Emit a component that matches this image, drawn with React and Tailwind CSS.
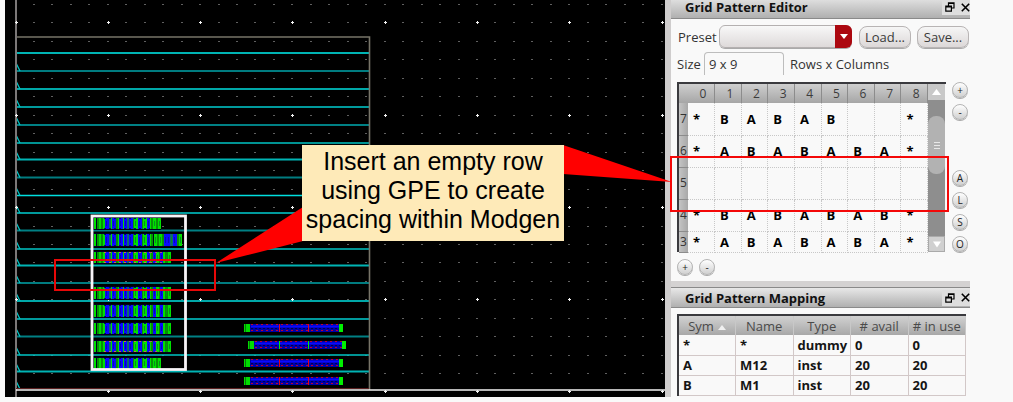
import React from 'react';

const BLACK_BG = '#000000';
const MINOR = 18.46;

const trackYs = [53, 71, 89, 107, 125, 143, 159.5, 177.5, 195.5, 213, 230.5, 249, 265.5, 283, 301, 319, 336.5, 355, 371.5];
const trackColors = ['#00b4b4', '#007c80', '#00e0e0', '#009a9c', '#008084', '#00c4c4'];

// [x, width, color] of the stripes in one device row
const G = '#00e000';
const D = '#069006';
const B = '#0a0aff';
const T = '#0a6a70';
const stripes = [
  [94, 2, G], [97, 2, D], [99, 2, G], [101, 2, D], [103, 2, G], [105, 4, B], [109, 2, T], [111, 1, G], [112, 4, B],
  [116, 2, D], [118, 1, G], [119, 4, B], [123, 1, G], [124, 3, B], [127, 2, T], [129, 4, B], [133, 1, D],
  [134, 4, G], [138, 4, B], [142, 1, D], [143, 4, G], [147, 3, B], [150, 1, G], [151, 2, D],
];
const tails = {
  short: [[153, 3, G], [156, 2, D], [158, 3, G]],
  mid: [[153, 3, B], [156, 3, G], [159, 1, D], [160, 3, B], [163, 2, G], [165, 3, D], [168, 3, G]],
  long: [[154, 3, G], [157, 2, D], [159, 3, G], [162, 2, D], [164, 3, B], [167, 3, B], [170, 3, T], [173, 4, B], [177, 2, D], [179, 3, G]],
};
const deviceRows = [
  [218, 11, 'short', false], [234, 12, 'long', false], [252, 11, 'mid', true], [287, 12, 'mid', false],
  [305, 12, 'mid', false], [323, 11, 'mid', false], [341, 11, 'mid', true], [358, 11, 'short', false],
];

const bars = [
  [244, 343, 324, 'red'], [248, 346, 341, 'green'], [244, 343, 359, 'red'], [244, 343, 377, 'red'],
];

function DeviceRow({ y, h, tail, warm }) {
  const all = stripes.concat(tails[tail]);
  return (
    <g>
      {all.map(([x, w, c]) => (
        <g key={x}>
          <rect x={x} y={y} width={w} height={h} fill={c} />
          {w > 2 && <rect x={x + 1} y={y + 3} width="1" height={h - 6} fill={c === B ? '#0808b8' : '#088c20'} />}
        </g>
      ))}
      <path d={`M104 ${y}.5H150M104 ${y + h - 1}.5H150`} stroke={warm ? '#c86a50' : '#000080'} strokeDasharray="2 3" />
      {warm && <path d={`M150 ${y}.5H164M150 ${y + h - 1}.5H164`} stroke="#b05078" strokeDasharray="2 3" />}
    </g>
  );
}

function Bar({ x1, x2, y, mark }) {
  return (
    <g>
      <rect x={x1 + 6} y={y} width={x2 - x1 - 10} height="8" fill="#0000a8" />
      <path d={`M${x1 + 7} ${y + 2.5}H${x2 - 4}`} stroke="#0a0aff" strokeWidth="2" />
      <path d={`M${x1 + 7} ${y + 4}.5H${x2 - 4}`} stroke="#000050" strokeDasharray="2 2" />
      <path d={`M${x1 + 7} ${y + 0.5}H${x2 - 4}M${x1 + 7} ${y + 6}.5H${x2 - 4}`} stroke="#c00030" strokeDasharray="2 3" />
      <rect x={x1} y={y} width="6" height="8" fill="#00dc00" />
      <rect x={x1 + 1} y={y} width="1" height="8" fill="#067a06" />
      <rect x={x2 - 4} y={y} width="4" height="8" fill="#00f000" />
      <rect x="279" y={y} width="1" height="8" fill={mark === 'green' ? '#00f000' : '#e00020'} />
      <rect x="308" y={y} width="1" height="8" fill={mark === 'green' ? '#00f000' : '#e00020'} />
    </g>
  );
}

function LayoutCanvas() {
  const minor = [];
  const major = [];
  for (let r = 0; r < 21; r++) {
    for (let c = 0; c < 36; c++) {
      const x = Math.round(15.5 + c * MINOR);
      const y = Math.round(4 + r * MINOR);
      if (c % 5 === 0 && r % 5 === 1) major.push([x, y]);
      else if (c > 0) minor.push([x, y]);
    }
  }
  for (let c = 1; c < 8; c++) major.push([Math.round(15.5 + c * 5 * MINOR), 391]);
  return (
    <svg width="665" height="397" viewBox="0 0 665 397" className="block" role="img" aria-label="Layout canvas">
      <rect x="5" width="660" height="397" fill={BLACK_BG} />
      {minor.map(([x, y]) => <rect key={`${x}-${y}`} x={x - 1} y={y} width="2" height="1" fill="#606060" />)}
      {trackYs.map((y, i) => (
        <g key={y}>
          <path d={`M16 ${y}H369`} stroke={trackColors[i % 6]} strokeWidth={i % 3 === 2 ? 1.3 : 2} />
          {i > 0 && <path d={`M16.5 ${y - 7}L20 ${y}`} stroke="#00c8c8" strokeWidth="1.3" fill="none" />}
        </g>
      ))}
      <path d="M16.5 382L20 389" stroke="#00c8c8" strokeWidth="1.3" />
      <path d="M16 37H369.500V390" stroke="#777468" strokeWidth="1.6" fill="none" />
      <path d="M16 0V397" stroke="#7c7878" strokeWidth="2" />
      {major.map(([x, y]) => (
        <path key={`${x}-${y}`} d={`M${x - 1} ${y + 0.5}h3M${x + 0.5} ${y - 1}v3`} stroke="#f4f4f4" />
      ))}
      <path d="M16 388.500H369" stroke="#5a2020" />
      <path d="M16 390H665" stroke="#f4f4f4" strokeWidth="1.400" />
      {deviceRows.map(([y, h, tail, warm]) => (
        <rect key={y} x="93" y={y - 1} width={tail === 'short' ? 68 : 78} height={h + 2} fill="#000020" />
      ))}
      {deviceRows.map(([y, h, tail, warm]) => <DeviceRow key={y} y={y} h={h} tail={tail} warm={warm} />)}
      <rect x="92" y="216" width="93.500" height="153.500" fill="none" stroke="#f8f4f8" strokeWidth="2.800" />
      {bars.map(([x1, x2, y, mark]) => <Bar key={y} x1={x1} x2={x2} y={y} mark={mark} />)}
      <rect x="55" y="260" width="160" height="30" fill="none" stroke="#e80808" strokeWidth="2" />
    </svg>
  );
}

function TitleBar({ title, className }) {
  return (
    <div className={`flex items-center border-y border-[#8a8a8a] bg-linear-to-b from-[#e8e8e8] to-[#b0b0b0] pl-[14px] ${className}`}>
      <h2 className="grow text-[13px] leading-4 font-bold text-[#111]">{title}</h2>
      <button aria-label="Float" className="flex size-4 items-center justify-center bg-[#dedede]">
        <svg width="10" height="10" viewBox="0 0 10 10" fill="none" stroke="#000" strokeWidth="1.200">
          <path d="M3.500 3.500V.8H9V6H6.500M3.500 1.500H9M.8 4H6.400V9.200H.8ZM.8 5H6.400" />
        </svg>
      </button>
      <button aria-label="Close" className="flex h-4 w-3 items-center justify-end bg-[#dedede]">
        <svg width="9" height="9" viewBox="0 0 9 9" stroke="#000" strokeWidth="1.600">
          <path d="M.8 .8L8.200 8.200M8.200 .8L.8 8.200" />
        </svg>
      </button>
    </div>
  );
}

function RoundButton({ children }) {
  return (
    <button className="flex size-4 items-center justify-center rounded-full border border-[#b4b4b4] bg-linear-to-b from-white to-[#d0d0d0] text-[10px] leading-3 text-[#222] shadow-[0_1px_0_#a8a8a8]">
      {children}
    </button>
  );
}

function PushButton({ children }) {
  return (
    <button className="h-[22px] w-[52px] rounded-lg border border-[#b8b4b4] bg-linear-to-b from-[#f6f6f6] to-[#dcd8d8] text-[13px] leading-4 text-[#3a3a3a] shadow-[0_1px_0_#aaa]">
      {children}
    </button>
  );
}

const gridRows = [
  ['7', '*BABAB  *'],
  ['6', '*ABABABA*'],
  ['5', '         '],
  ['4', '*BABABAB*'],
  ['3', '*ABABABA*'],
];

function PatternGrid() {
  return (
    <div className="flex h-[170px] w-[269px] border-t-2 border-l-2 border-[#3a3a3e]">
      <table className="w-[249px] shrink-0 table-fixed border-collapse self-start text-[12px] leading-4">
        <thead>
          <tr className="h-[19px] bg-linear-to-b from-[#cfcfcf] to-[#a6a6a6] text-[#3c3c3c]">
            <th className="w-[9px] p-0" aria-label="Row" />
            {[0, 1, 2, 3, 4, 5, 6, 7, 8].map((n) => (
              <th key={n} scope="col" className="border-r border-[#8c8c8c] p-0 pl-1 font-normal">{n}</th>
            ))}
          </tr>
        </thead>
        <tbody>
          {gridRows.map(([label, cells]) => (
            <tr key={label} className="h-8 last:h-[21px]">
              <th scope="row" className="border-b border-[#8c8c8c] bg-linear-to-r from-[#c4c4c4] to-[#a8a8a8] p-0 font-normal text-[#333]">{label}</th>
              {cells.split('').map((ch, i) => (
                <td key={i} className="border-r border-b border-dotted border-[#c8c8c8] p-0 pl-[5px] text-[13px] font-bold text-black">
                  {ch}
                </td>
              ))}
            </tr>
          ))}
        </tbody>
      </table>
      <div className="flex w-[17px] flex-col bg-[#8e8e8e]">
        <button aria-label="Scroll up" className="flex h-4 items-center justify-center bg-[#c8c8c8]">
          <svg width="9" height="6" viewBox="0 0 9 6" fill="#fff"><path d="M4.500 0L9 6H0Z" /></svg>
        </button>
        <div className="mt-4 flex h-[58px] items-center justify-center rounded-lg bg-[#b2b2b2]">
          <svg width="6" height="9" viewBox="0 0 6 9" stroke="#e8e8e8"><path d="M0 1.500H6M0 4.500H6M0 7.500H6" /></svg>
        </div>
        <div className="grow" />
        <button aria-label="Scroll down" className="flex h-4 items-center justify-center border border-[#aaa] bg-[#d0d0d0]">
          <svg width="8" height="7" viewBox="0 0 9 7" fill="#fff"><path d="M0 0H9L4.500 7Z" /></svg>
        </button>
      </div>
    </div>
  );
}

const mapping = [
  ['*', '*', 'dummy', '0', '0'],
  ['A', 'M12', 'inst', '20', '20'],
  ['B', 'M1', 'inst', '20', '20'],
];

function MappingTable() {
  return (
    <table className="w-full table-fixed border-collapse border-t-2 border-l-2 border-[#3a3a3e] text-left text-[13px] leading-4">
      <thead>
        <tr className="h-5 bg-linear-to-b from-[#d4d4d4] to-[#a8a8a8] text-[#4a4a4a]">
          {['Sym', 'Name', 'Type', '# avail', '# in use'].map((h) => (
            <th key={h} scope="col" className="border-r border-[#c8c8c8] p-0 text-center font-normal whitespace-nowrap">
              {h}
              {h === 'Sym' && (
                <svg width="8" height="5" viewBox="0 0 8 5" className="ml-1 inline-block align-middle"><path d="M4 0L8 5H0Z" fill="#f0f0f0" /></svg>
              )}
            </th>
          ))}
        </tr>
      </thead>
      <tbody>
        {mapping.map((row) => (
          <tr key={row[0]} className="h-5">
            {row.map((v, i) => (
              <td key={i} className="border-r border-b border-[#d2c8c8] p-0 pl-1 font-bold text-[#151515]">{v}</td>
            ))}
          </tr>
        ))}
      </tbody>
    </table>
  );
}

function SidePanel() {
  return (
    <aside className="mr-[43px] flex w-[305px] shrink-0 flex-col border-l-[6px] border-[#cfcdcd]">
      <TitleBar title="Grid Pattern Editor" className="-mt-[5px] h-6" />
      <div className="flex items-center pt-[6px] pl-[7px] text-[13px] leading-4 text-[#333]">
        <label htmlFor="preset" className="w-[41px]">Preset</label>
        <div className="relative mr-[7px] h-[23px] w-[133px]">
          <select id="preset" className="size-full appearance-none rounded-md border border-[#b4b0b0] bg-linear-to-b from-[#f8f8f8] to-[#dedada] shadow-[0_1px_0_#aaa]">
            <option value="" />
          </select>
          <span className="pointer-events-none absolute inset-y-0 right-0 flex w-[17px] items-center justify-center rounded-r-md bg-[#ac0810]">
            <svg width="8" height="5" viewBox="0 0 8 5" fill="#fff"><path d="M0 0H8L4 5Z" /></svg>
          </span>
        </div>
        <div className="flex gap-[6px]">
          <PushButton>Load...</PushButton>
          <PushButton>Save...</PushButton>
        </div>
      </div>
      <div className="flex items-center pt-1 pl-[6px] text-[13px] leading-4 text-[#333]">
        <label htmlFor="size" className="w-[27px]">Size</label>
        <input id="size" defaultValue="9 x 9" className="mr-[6px] h-[23px] w-[80px] rounded-t border border-b-0 border-[#bdbdbd] bg-[#f9f9f9] px-1" />
        <span>Rows x Columns</span>
      </div>
      <div className="relative flex justify-between pt-[7px] pr-[2px] pl-[6px]">
        <PatternGrid />
        <div className="flex flex-col gap-[6px]">
          <RoundButton>+</RoundButton>
          <RoundButton>-</RoundButton>
          <div className="h-[38px]" />
          <RoundButton>A</RoundButton>
          <RoundButton>L</RoundButton>
          <RoundButton>S</RoundButton>
          <RoundButton>O</RoundButton>
        </div>
        <div className="pointer-events-none absolute top-[81px] -left-px h-[56px] w-[279px] border-2 border-[#f40808]" />
      </div>
      <div className="flex gap-[6px] pt-[7px] pb-[6px] pl-[6px]">
        <RoundButton>+</RoundButton>
        <RoundButton>-</RoundButton>
      </div>
      <div className="h-[6px] bg-[#d4d2d2]" />
      <TitleBar title="Grid Pattern Mapping" className="h-[21px]" />
      <div className="pt-[6px] pr-1 pl-[6px]">
        <MappingTable />
      </div>
    </aside>
  );
}

export default function App() {
  return (
    <main className="min-h-screen bg-[#f9f9f9] font-['Open_Sans','Noto_Sans',sans-serif]">
      <div className="relative flex overflow-hidden">
        <section className="min-w-0 grow overflow-hidden">
          <LayoutCanvas />
        </section>
        <SidePanel />
        <svg width="672" height="270" viewBox="0 0 672 270" className="pointer-events-none absolute top-0 left-0" fill="#ff0000">
          <path d="M303 207L303 241L216 263Z" />
          <path d="M563 145L563 174L672 182Z" />
        </svg>
        <p className="absolute top-[145px] left-[302px] w-[262px] bg-[#feeab8] pt-[2px] pb-[7px] text-center font-['Liberation_Sans',sans-serif] text-[25px] leading-[29px] whitespace-nowrap text-black">
          Insert an empty row<br />using GPE to create<br />spacing within Modgen
        </p>
      </div>
    </main>
  );
}
